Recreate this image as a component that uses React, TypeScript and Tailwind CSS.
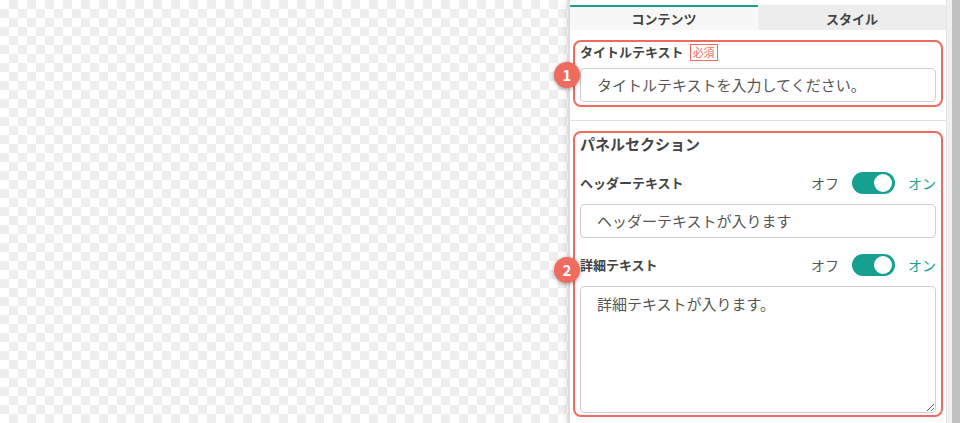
const jp = { fontFamily: '"Noto Sans CJK JP", "Noto Sans", sans-serif' };

function Badge({ n, className }: { n: number; className: string }) {
  return (
    <div
      className={`absolute flex h-[26px] w-[26px] items-center justify-center rounded-full bg-[#ef6a5f] text-[15px] font-bold text-white shadow-[0_1px_4px_rgba(0,0,0,0.35)] ${className}`}
    >
      {n}
    </div>
  );
}

function Toggle() {
  return (
    <div className="flex items-center gap-[13px]">
      <span className="text-[14px] text-[#555]">オフ</span>
      <div className="flex h-[22px] w-[43px] items-center justify-end rounded-full bg-[#17a08f] px-[3px]">
        <div className="h-[18px] w-[18px] rounded-full bg-white" />
      </div>
      <span className="text-[14px] text-[#17a08f]">オン</span>
    </div>
  );
}

export default function App() {
  return (
    <div className="flex h-[423px] w-[960px] overflow-hidden bg-white" style={jp}>
      <div className="flex-1 bg-[repeating-conic-gradient(#eeeeee_0%_25%,#ffffff_0%_50%)] bg-[length:18px_18px]" />

      <div className="flex w-[392px] border-l-[2px] border-[#dcdcdc] shadow-[-3px_0_4px_rgba(0,0,0,0.08)]">
        <div className="flex min-w-0 flex-1 flex-col bg-white">
          <div className="h-[5px] bg-white" />
          <div className="flex h-[25px]">
            <div className="flex flex-1 items-center justify-center border-t-[2px] border-[#17a08f] bg-[#f7f7f7] text-[13px] font-bold text-[#444]">
              コンテンツ
            </div>
            <div className="flex flex-1 items-center justify-center border-t-[2px] border-[#ededed] bg-[#ededed] text-[13px] font-bold text-[#444]">
              スタイル
            </div>
          </div>

          <div className="px-[3px] pt-[10px]">
            <div className="relative rounded-[8px] border-[2px] border-[#f06a5f] px-[5px] pb-[3px]">
              <Badge n={1} className="left-[-21px] top-[20px]" />
              <div className="flex h-[20px] items-center gap-[6px]">
                <span className="text-[13px] font-bold text-[#444]">タイトルテキスト</span>
                <span className="border border-[#f06a5f] px-[2px] text-[11px] leading-[15px] text-[#f06a5f]">必須</span>
              </div>
              <div className="mt-[6px] flex h-[34px] items-center rounded-[4px] border border-[#cfcfcf] px-[16px] text-[15px] text-[#555]">
                タイトルテキストを入力してください。
              </div>
            </div>
          </div>

          <div className="mt-[13px] h-px bg-[#dddddd]" />

          <div className="flex-1 px-[3px] pt-[10px]">
            <div className="relative rounded-[8px] border-[2px] border-[#f06a5f] px-[5px]">
              <Badge n={2} className="left-[-21px] top-[124px]" />
              <div className="text-[15px] font-bold leading-[22px] text-[#444]">パネルセクション</div>

              <div className="mt-[17px] flex h-[22px] items-center justify-between">
                <span className="text-[13px] font-bold text-[#444]">ヘッダーテキスト</span>
                <Toggle />
              </div>
              <div className="mt-[10px] flex h-[34px] items-center rounded-[4px] border border-[#cfcfcf] px-[16px] text-[15px] text-[#555]">
                ヘッダーテキストが入ります
              </div>

              <div className="mt-[16px] flex h-[22px] items-center justify-between">
                <span className="text-[13px] font-bold text-[#444]">詳細テキスト</span>
                <Toggle />
              </div>
              <textarea
                readOnly
                defaultValue="詳細テキストが入ります。"
                className="mt-[10px] block h-[127px] w-full resize-y rounded-[4px] border border-[#cfcfcf] px-[16px] py-[6px] text-[15px] text-[#555] outline-none"
                style={jp}
              />
              <div className="h-[2px]" />
            </div>
          </div>
        </div>

        <div className="flex w-[14px]">
          <div className="w-[6px] border-l border-[#e4e4e4] bg-[#f1f1f1]" />
          <div className="flex-1 bg-[#c1c1c1]" />
        </div>
      </div>
    </div>
  );
}
